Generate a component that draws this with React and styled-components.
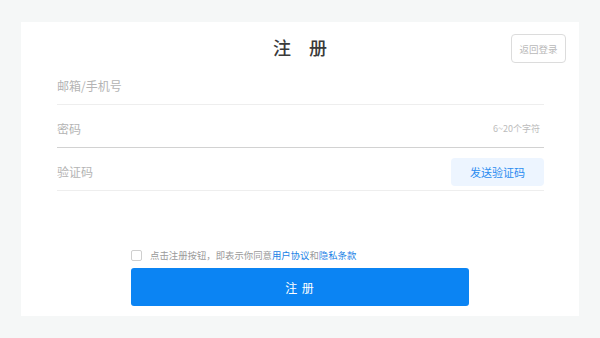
import React, { useState } from 'react';
import styled, { createGlobalStyle } from 'styled-components';

const GlobalStyle = createGlobalStyle`
  html, body {
    margin: 0;
    padding: 0;
    background: #f5f7f7;
    font-family: 'Noto Sans CJK SC', 'Noto Sans', sans-serif;
  }
  * {
    box-sizing: border-box;
  }
`;

const Page = styled.div`
  width: 600px;
  height: 338px;
  padding: 22px 21px;
`;

const Card = styled.div`
  width: 558px;
  height: 294px;
  background: #fff;
  display: flex;
  flex-direction: column;
`;

const Header = styled.div`
  height: 40px;
  padding: 12px 13px 0;
  display: grid;
  grid-template-columns: 1fr auto 1fr;
  align-items: start;
`;

const Title = styled.h1`
  grid-column: 2;
  margin: 0;
  height: 28px;
  line-height: 26px;
  font-size: 18px;
  font-weight: 500;
  color: #3a3a3a;
  letter-spacing: 7px;
  text-indent: 7px;
`;

const BackButton = styled.button`
  grid-column: 3;
  justify-self: end;
  width: 55px;
  height: 29px;
  padding: 0;
  border: 1px solid #dcdcdc;
  border-radius: 4px;
  background: #fff;
  color: #b8b8b8;
  font-family: inherit;
  font-size: 9.5px;
  cursor: pointer;
`;

const Form = styled.div`
  padding: 0 35px 0 36px;
`;

const Field = styled.div`
  height: 43px;
  padding-top: 5px;
  display: flex;
  align-items: center;
  justify-content: space-between;
  border-bottom: 1px solid ${(p) => (p.$active ? '#d2d2d2' : '#eeeeee')};
`;

const Input = styled.input`
  flex: 1;
  min-width: 0;
  border: none;
  outline: none;
  padding: 0;
  font-family: inherit;
  font-size: 12px;
  color: #333;
  background: transparent;
  &::placeholder {
    color: #b4b4b4;
  }
`;

const Hint = styled.span`
  font-size: 9px;
  color: #bcbcbc;
  margin-right: 4px;
`;

const CodeButton = styled.button`
  width: 93px;
  height: 28px;
  border: none;
  border-radius: 4px;
  background: #edf5ff;
  color: #2b8cf0;
  font-family: inherit;
  font-size: 11px;
  cursor: pointer;
`;

const Footer = styled.div`
  margin-top: auto;
  align-self: center;
  width: 338px;
  padding-bottom: 10px;
`;

const Agreement = styled.label`
  height: 14px;
  margin-bottom: 6px;
  display: flex;
  align-items: center;
  gap: 8px;
  font-size: 9.4px;
  color: #9a9a9a;
`;

const Check = styled.span`
  width: 11px;
  height: 11px;
  border: 1px solid #cfcfcf;
  border-radius: 2px;
  background: ${(p) => (p.$on ? '#0b84f3' : '#fff')};
`;

const Link = styled.a`
  color: #1a82e6;
  text-decoration: none;
`;

const Submit = styled.button`
  display: block;
  width: 100%;
  height: 38px;
  border: none;
  border-radius: 3px;
  background: #0b84f3;
  color: #fff;
  font-family: inherit;
  font-size: 12px;
  letter-spacing: 1px;
  cursor: pointer;
`;

export default function App() {
  const [agreed, setAgreed] = useState(false);

  return (
    <>
      <GlobalStyle />
      <Page>
        <Card>
          <Header>
            <Title>注 册</Title>
            <BackButton>返回登录</BackButton>
          </Header>
          <Form>
            <Field>
              <Input placeholder="邮箱/手机号" />
            </Field>
            <Field $active>
              <Input type="password" placeholder="密码" />
              <Hint>6~20个字符</Hint>
            </Field>
            <Field>
              <Input placeholder="验证码" />
              <CodeButton>发送验证码</CodeButton>
            </Field>
          </Form>
          <Footer>
            <Agreement onClick={() => setAgreed(!agreed)}>
              <Check $on={agreed} />
              <span>
                点击注册按钮，即表示你同意<Link>用户协议</Link>和<Link>隐私条款</Link>
              </span>
            </Agreement>
            <Submit>注 册</Submit>
          </Footer>
        </Card>
      </Page>
    </>
  );
}
